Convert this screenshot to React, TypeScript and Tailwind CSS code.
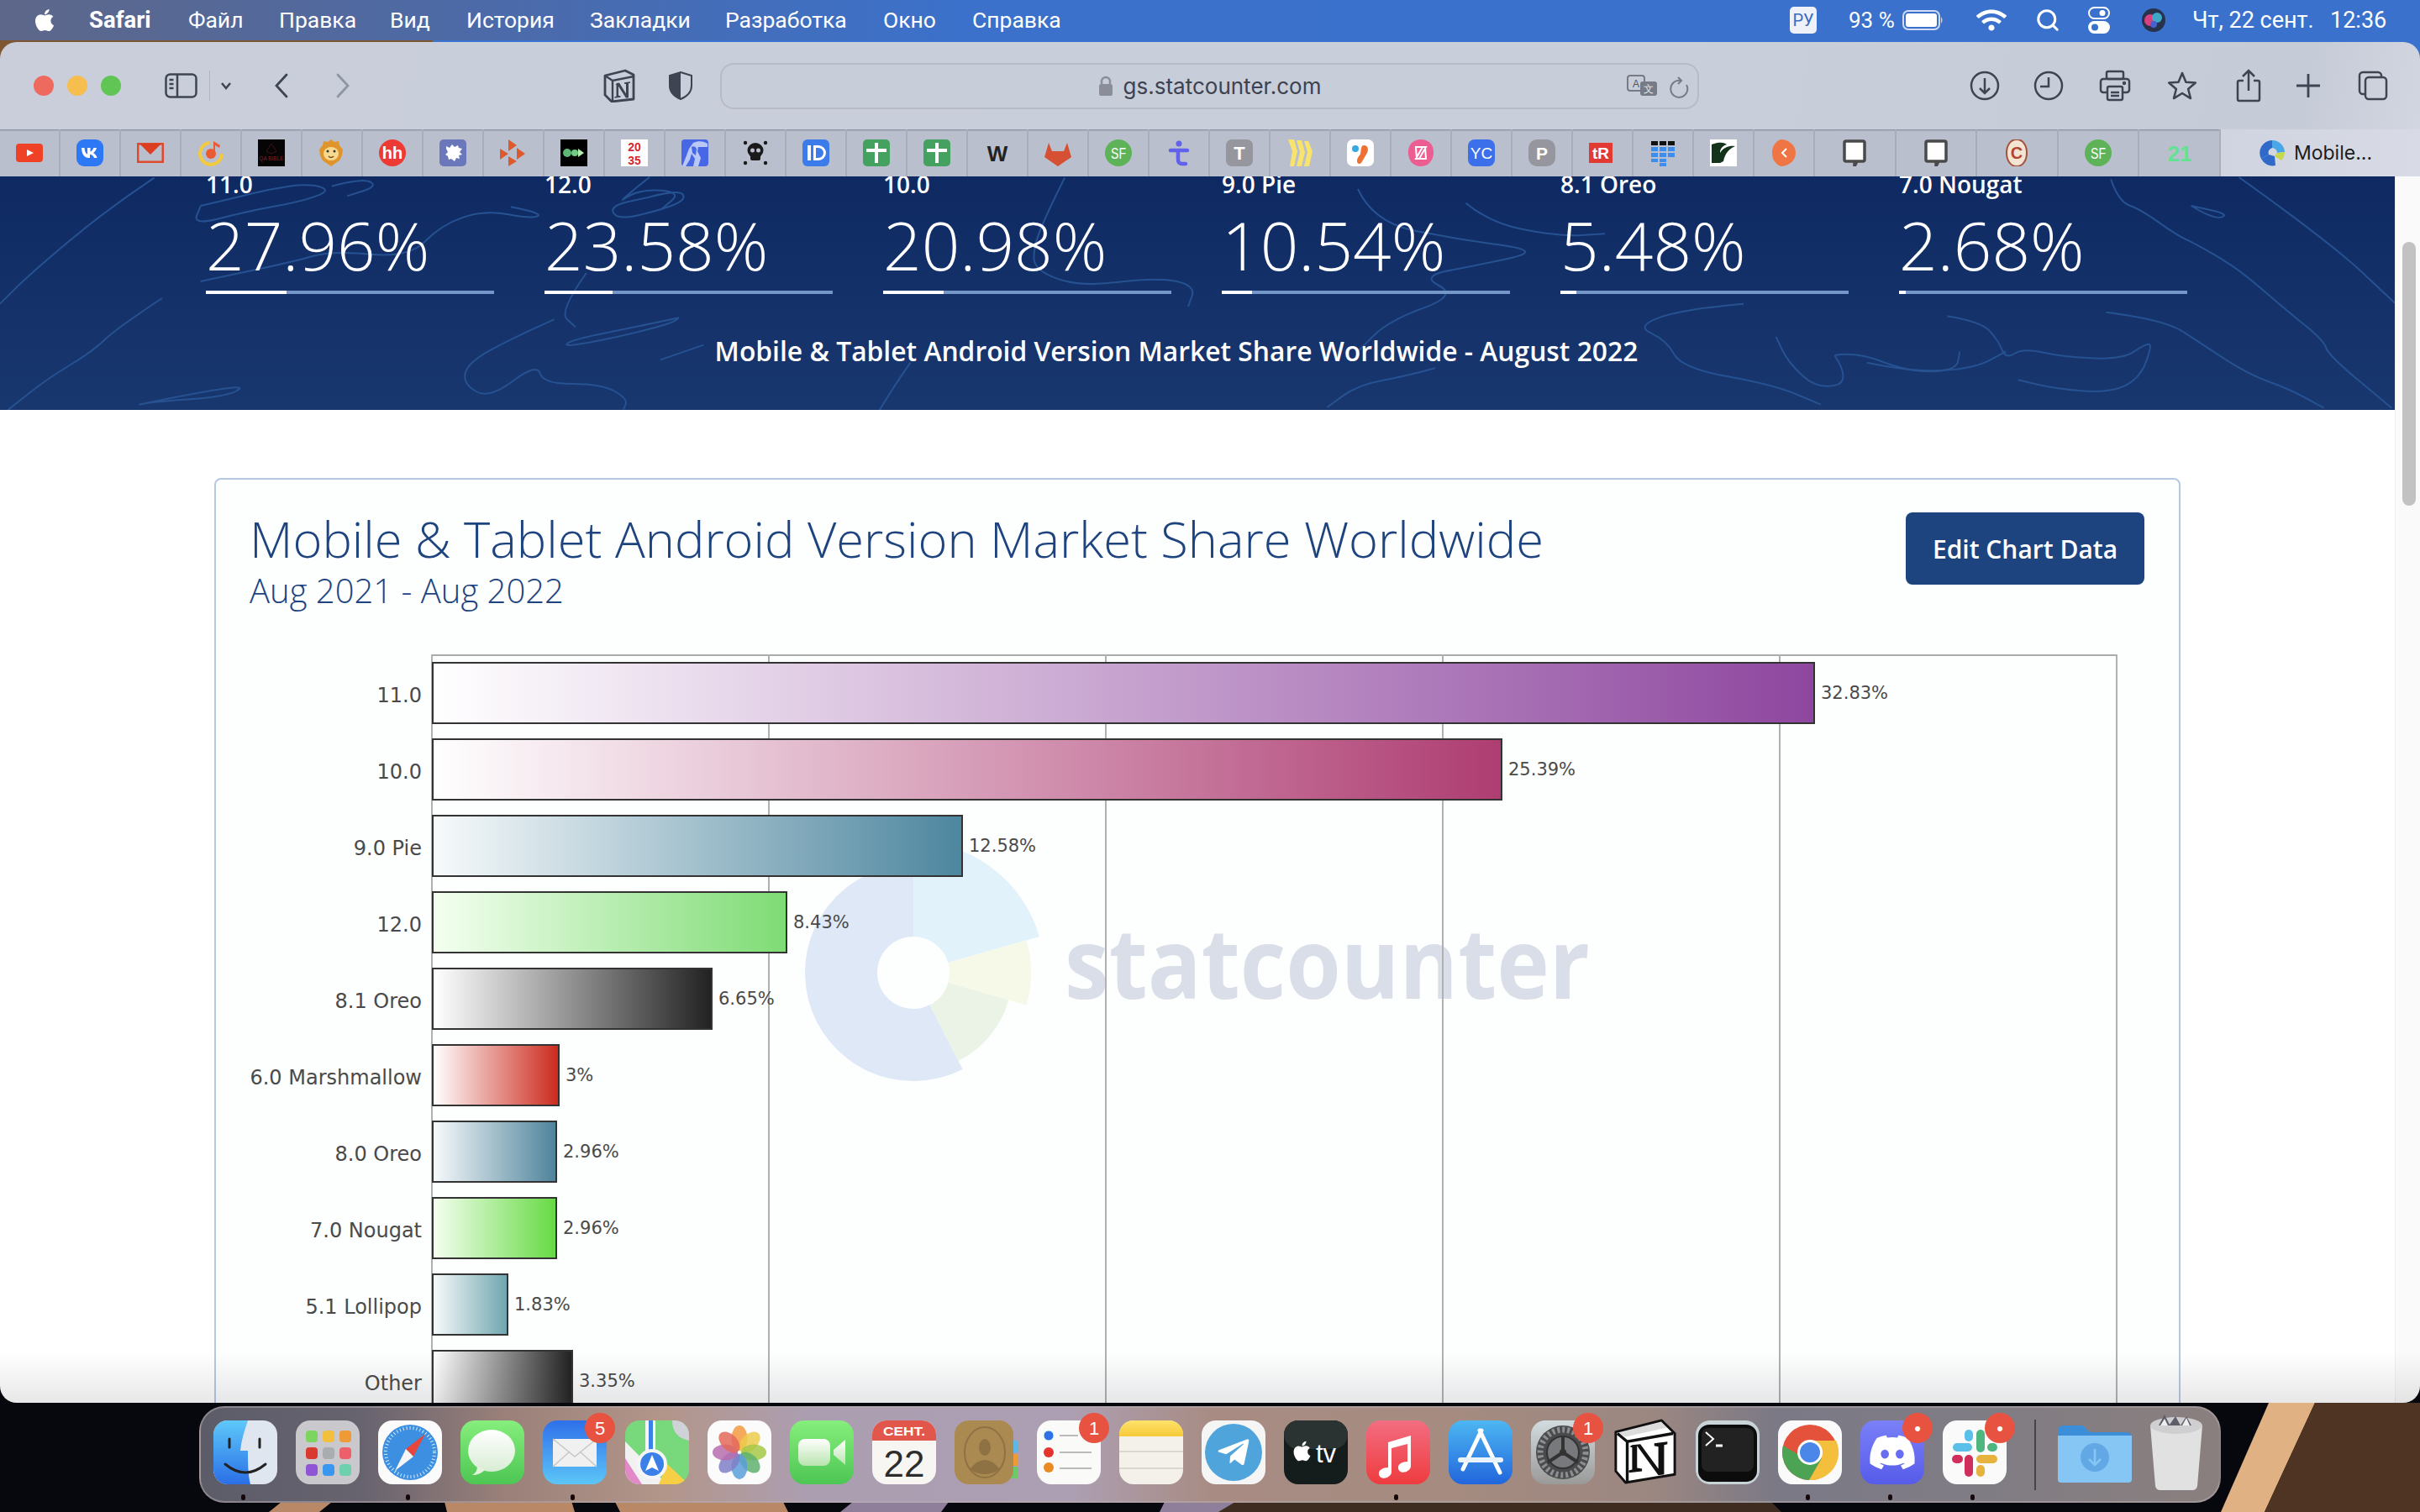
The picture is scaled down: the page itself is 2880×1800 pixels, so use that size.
import React from "react";
import { FaApple, FaDiscord, FaTelegramPlane, FaWifi } from "react-icons/fa";
import { Search } from "lucide-react";

const SF = "font-['Liberation_Sans',sans-serif]";

function Fav({ children }: { children: React.ReactNode }) {
  return <svg width="32" height="32" viewBox="0 0 32 32" fontFamily="Liberation Sans, sans-serif">{children}</svg>;
}

const favs: React.ReactNode[] = [
  <Fav><rect y="5" width="32" height="22" rx="4" fill="#ee4126" /><path d="M13 12l8 4-8 4z" fill="#fff" /></Fav>,
  <Fav><rect width="32" height="32" rx="9" fill="#2d78f4" /><path d="M6 10h3.500c.5 5 2 7 3.500 7.500V10h3.500v4.500c1.500-.2 3-2 3.800-4.500H24c-.6 3-2.400 5-4 6 1.800 1 3.800 2.800 4.600 6H21c-.7-2.400-2.600-4-5-4.300V22h-1C9.500 22 6.300 18 6 10z" fill="#fff" /></Fav>,
  <Fav><rect width="32" height="24" y="4" fill="#e04a2c" /><rect x="2.500" y="6.500" width="27" height="19" fill="#b9bfcd" /><path d="M3 5h26L16 18z" fill="#dc3e22" /></Fav>,
  <Fav><path d="M14 4A13 13 0 1 0 29 17" fill="none" stroke="#f5c93d" strokeWidth="4" /><circle cx="16" cy="17" r="6" fill="#ec5a32" /><path d="M19 2v14h2V7l5 3 1-3z" fill="#ec5a32" /></Fav>,
  <Fav><rect width="32" height="32" fill="#050505" /><path d="M16 5l6 9-6 3-6-3z" fill="none" stroke="#401014" strokeWidth="1" /><text x="16" y="25" fontSize="6.500" fill="#7a2228" textAnchor="middle">QA BIBLE</text></Fav>,
  <Fav><path d="M15 0l4 3 5-1 1 5 4 5-1 7-3 6-10 7-10-7-3-6-1-7 4-5 1-5 5 1z" fill="#e0952c" /><ellipse cx="15" cy="17" rx="9" ry="8" fill="#f6d98f" /><circle cx="11" cy="14" r="1.500" fill="#333" /><circle cx="19" cy="14" r="1.500" fill="#333" /><path d="M12 20q3 3 6 0" fill="none" stroke="#7a4a16" strokeWidth="1.500" /></Fav>,
  <Fav><circle cx="16" cy="16" r="16" fill="#ee3a34" /><text x="16" y="23" fontSize="20" fontWeight="700" fill="#fff" textAnchor="middle">hh</text></Fav>,
  <Fav><rect width="32" height="32" rx="5" fill="#6a78bb" /><path d="M8 8l4 2 3-4 3 3 4-2 1 3 4 1-3 4 3 3-4 1 1 4-4-1-2 4-4-3-3 1-1-4-3-2 3-3-2-4z" fill="#fff" /></Fav>,
  <Fav><path d="M10 0l10 7-10 7zM0 11l10 6-10 7zM20 10l10 7-10 7zM10 20l10 6-10 6z" fill="#dc5a2e" /></Fav>,
  <Fav><rect width="32" height="32" fill="#000" /><circle cx="8" cy="16" r="5" fill="#5cb876" /><circle cx="17" cy="16" r="4" fill="#6fcc80" /><path d="M21 11l7 5-7 5z" fill="#b5ecb0" /></Fav>,
  <Fav><rect width="32" height="32" fill="#fff" /><text x="16" y="13.500" fontSize="14" fontWeight="700" fill="#cf2a30" textAnchor="middle">20</text><text x="16" y="30" fontSize="14" fontWeight="700" fill="#cf2a30" textAnchor="middle">35</text></Fav>,
  <Fav><rect width="32" height="32" rx="4" fill="#4767e6" /><path d="M14 4c6-3 13-2 17 1v4H20l-1 5 4 8-3 10h-6l2-9-4-6-2 7-5 8H1l5-13 3-8z" fill="#b9c8f6" /><path d="M12 9q4-2 6 2l-1 8-4-3z" fill="#4767e6" /></Fav>,
  <Fav><ellipse cx="16" cy="13" rx="9.500" ry="9" fill="#1a1a1a" /><rect x="10" y="18" width="12" height="7" rx="2" fill="#1a1a1a" /><circle cx="12.500" cy="13" r="2.500" fill="#b9bfcd" /><circle cx="19.500" cy="13" r="2.500" fill="#b9bfcd" /><circle cx="4" cy="4" r="2.200" fill="#1a1a1a" /><circle cx="28" cy="4" r="2.200" fill="#1a1a1a" /><circle cx="4" cy="28" r="2.200" fill="#1a1a1a" /><circle cx="28" cy="28" r="2.200" fill="#1a1a1a" /></Fav>,
  <Fav><rect width="32" height="32" rx="6" fill="#3c7bea" /><path d="M6 7h4v18H6z" fill="#fff" /><path d="M13 7h6a9 9 0 0 1 0 18h-6z M16 10v12h3a6 6 0 0 0 0-12z" fill="#fff" fillRule="evenodd" /></Fav>,
  <Fav><rect width="32" height="32" rx="5" fill="#44a160" /><rect x="14" y="4" width="4" height="24" fill="#fff" /><rect x="4" y="11" width="24" height="4" fill="#fff" /></Fav>,
  <Fav><rect width="32" height="32" rx="5" fill="#44a160" /><rect x="14" y="4" width="4" height="24" fill="#fff" /><rect x="4" y="11" width="24" height="4" fill="#fff" /></Fav>,
  <Fav><text x="16" y="26" fontSize="26" fontWeight="700" fill="#222" textAnchor="middle">W</text></Fav>,
  <Fav><path d="M5 4l4 10h14l4-10 5 17-16 11L0 21z" fill="#d65034" /></Fav>,
  <Fav><circle cx="16" cy="16" r="16" fill="#5eb358" /><text x="16" y="23" fontSize="19" fill="#fff" textAnchor="middle" textLength="18" lengthAdjust="spacingAndGlyphs">SF</text></Fav>,
  <Fav><circle cx="16" cy="5" r="3.500" fill="#6161ec" /><path d="M6 13h20M15 13v11q0 5 5 5h4" fill="none" stroke="#6161ec" strokeWidth="4.500" strokeLinecap="round" /></Fav>,
  <Fav><rect width="32" height="32" rx="7" fill="#96969f" /><text x="16" y="24" fontSize="22" fontWeight="700" fill="#fff" textAnchor="middle">T</text></Fav>,
  <Fav><path d="M2 0h7l4 14-4 18H4l3-18zM12 1h6l4 14-4 17h-6l4-17zM21 2h5l5 12-4 18h-6l4-17z" fill="#f8e36c" /></Fav>,
  <Fav><rect width="32" height="32" rx="7" fill="#fff" /><path d="M20 7c5 0 6 5 4 9l-7 12c-2 2-5 1-5-2 0-5 3-6 4-9s0-10 4-10z" fill="#ed7132" /><circle cx="10" cy="11" r="4" fill="#3aa8e0" /></Fav>,
  <Fav><path d="M16 0c8 0 14 5 15 13 1 10-5 19-15 19S0 24 1 13C2 5 8 0 16 0z" fill="#ec5e92" /><path d="M10 9h12l-8 14h-3zM22 23H10l8-14h3z" fill="none" stroke="#fff" strokeWidth="2" /></Fav>,
  <Fav><rect width="32" height="32" rx="8" fill="#3c70ea" /><text x="16" y="23" fontSize="19" fill="#fff" textAnchor="middle">YC</text></Fav>,
  <Fav><rect width="32" height="32" rx="10" fill="#96969f" /><text x="16" y="24" fontSize="21" fontWeight="700" fill="#fff" textAnchor="middle">P</text></Fav>,
  <Fav><rect y="4" width="28" height="24" fill="#e23a33" /><text x="14" y="23" fontSize="19" fontWeight="700" fill="#fff" textAnchor="middle">tR</text></Fav>,
  <Fav><path d="M2 2h8v5H2zM12 2h8v5h-8zM22 2h8v5h-8z" fill="#111" /><path d="M2 9h8v5H2zM12 9h8v5h-8zM22 9h8v5h-8zM2 16h8v5H2zM12 16h8v5h-8zM22 16h8v5h-8zM2 23h8v4H2zM12 23h8v4h-8zM12 28h8v4h-8z" fill="#3d8cf0" /></Fav>,
  <Fav><rect width="32" height="32" fill="#fff" /><path d="M2 28V6c10-4 16-2 18 0-6 2-8 6-8 10 4-7 12-9 18-8-7 3-12 8-14 18l-4 2z" fill="#13341a" /></Fav>,
  <Fav><path d="M12 0c10 0 18 7 18 16s-8 16-18 16C4 28 2 22 2 16S4 4 12 0z" fill="#ef7644" /><path d="M19 11l-5 5 5 5" fill="none" stroke="#fff" strokeWidth="2" /></Fav>,
  <Fav><path d="M6 2h20a2 2 0 0 1 2 2v20a2 2 0 0 1-2 2h-7l-3 6v-6H6a2 2 0 0 1-2-2V4a2 2 0 0 1 2-2z" fill="#fff" stroke="#4a4a4a" strokeWidth="3.500" /></Fav>,
  <Fav><path d="M6 2h20a2 2 0 0 1 2 2v20a2 2 0 0 1-2 2h-7l-3 6v-6H6a2 2 0 0 1-2-2V4a2 2 0 0 1 2-2z" fill="#fff" stroke="#4a4a4a" strokeWidth="3.500" /></Fav>,
  <Fav><path d="M16 0c8 0 12 8 12 16s-4 16-12 16S4 24 4 16 8 0 16 0z" fill="#f4e5d2" stroke="#a4513c" strokeWidth="2" /><text x="16" y="23" fontSize="20" fontWeight="700" fill="#b3442f" textAnchor="middle">C</text></Fav>,
  <Fav><circle cx="16" cy="16" r="16" fill="#5eb358" /><text x="16" y="23" fontSize="19" fill="#fff" textAnchor="middle" textLength="18" lengthAdjust="spacingAndGlyphs">SF</text></Fav>,
  <Fav><text x="16" y="26" fontSize="26" fontWeight="700" fill="#62e292" textAnchor="middle">21</text></Fav>,
];

const menuItems: [string, string][] = [
  ["Файл", "w-[108px]"], ["Правка", "w-[132px]"], ["Вид", "w-[91px]"], ["История", "w-[147px]"],
  ["Закладки", "w-[161px]"], ["Разработка", "w-[188px]"], ["Окно", "w-[106px]"], ["Справка", "w-[140px]"],
];

function MenuBar() {
  return (
    <div className={`relative z-10 h-[48px] shrink-0 flex items-center text-white text-[26.5px] font-['Roboto',sans-serif] bg-[linear-gradient(90deg,#5d6789_0%,#4c6aa8_20%,#3b71cb_40%,#3a71cd_100%)]`}>
      <div className="w-[106px] pl-[38px]"><FaApple size={30} /></div>
      <div className="w-[118px] font-bold text-[27.5px]">Safari</div>
      {menuItems.map(([t, w]) => <div key={t} className={w}>{t}</div>)}
      <div className="flex-1" />
      <div className="w-[32px] h-[32px] rounded-[5px] bg-[#eef1f8] text-[#3a6cc0] text-[20px] flex items-center justify-center">РУ</div>
      <div className="ml-[38px] w-[64px] whitespace-nowrap text-[26px]">93 %</div>
      <svg width="50" height="24" viewBox="0 0 50 24"><rect x="1" y="1" width="43" height="22" rx="6" fill="none" stroke="#cfdcf4" strokeWidth="2" /><rect x="4" y="4" width="37" height="16" rx="3" fill="#fff" /><path d="M46 8q3 4 0 8z" fill="#cfdcf4" /></svg>
      <div className="ml-[38px] w-[40px]"><FaWifi size={36} /></div>
      <div className="ml-[30px] w-[28px]"><Search size={30} strokeWidth={2.400} /></div>
      <svg className="ml-[35px]" width="26" height="32" viewBox="0 0 26 32"><rect x="1" y="1" width="24" height="13" rx="6.500" fill="none" stroke="#fff" strokeWidth="2" /><circle cx="17" cy="7.500" r="3.500" fill="#fff" /><rect y="17" width="26" height="15" rx="7.500" fill="#fff" /><circle cx="8" cy="24.500" r="4" fill="#3a71cd" /></svg>
      <svg className="ml-[37px]" width="30" height="30" viewBox="0 0 30 30"><circle cx="15" cy="15" r="14" fill="#27324c" /><circle cx="11" cy="15" r="7" fill="#d8417e" /><circle cx="19" cy="12" r="6" fill="#3fa8c8" /><circle cx="15" cy="20" r="4" fill="#4a5fd0" /></svg>
      <div className="ml-[31px] w-[164px] whitespace-nowrap text-[27px]">Чт, 22 сент.</div>
      <div className="w-[107px] whitespace-nowrap text-[27px]">12:36</div>
    </div>
  );
}

const ic = "#3e4452";

function Toolbar() {
  return (
    <div className="h-[104px] shrink-0 flex items-center bg-[linear-gradient(100deg,#c9ceda_0%,#c8ceda_70%,#c6cbd8_95%,#d2d6e0_100%)] relative">
      <div className="w-[24px] h-[24px] rounded-full bg-[#ef6a5e] ml-[40px]" />
      <div className="w-[24px] h-[24px] rounded-full bg-[#f6bd4f] ml-[16px]" />
      <div className="w-[24px] h-[24px] rounded-full bg-[#60c554] ml-[16px]" />
      <svg className="ml-[52px]" width="40" height="30" viewBox="0 0 40 30" fill="none" stroke={ic} strokeWidth="2.500"><rect x="1.500" y="1.500" width="36" height="27" rx="5" /><path d="M15 2v26" /><path d="M5.500 8h5M5.500 13h5M5.500 18h5" /></svg>
      <div className="w-[1px] h-[36px] bg-[#aeb3c0] ml-[13px]" />
      <svg className="ml-[13px]" width="12" height="10" viewBox="0 0 12 10" fill="none" stroke={ic} strokeWidth="2.500"><path d="M1 2l5 6 5-6" /></svg>
      <svg className="ml-[51px]" width="18" height="30" viewBox="0 0 18 30" fill="none" stroke={ic} strokeWidth="2.800" strokeLinecap="round"><path d="M15 2L3 15l12 13" /></svg>
      <svg className="ml-[55px]" width="18" height="30" viewBox="0 0 18 30" fill="none" stroke="#8f95a3" strokeWidth="2.800" strokeLinecap="round"><path d="M3 2l12 13L3 28" /></svg>
      <svg className="ml-[301px]" width="38" height="40" viewBox="0 0 38 40"><path d="M2 8L26 2l10 5v29L10 39 2 31z" fill="none" stroke={ic} strokeWidth="2.800" strokeLinejoin="round" /><path d="M2 8l9 6 25-5M11 14v25" fill="none" stroke={ic} strokeWidth="2.400" /><path d="M16 17l3-.5 8 13V18l-2-.3v-1.500l7-1v1.500l-2 .5v17l-3 .5-9-14v11l2.500.5v1.500l-7 1v-1.500l2-.5V19l-1-.3z" fill={ic} /></svg>
      <svg className="ml-[40px]" width="28" height="34" viewBox="0 0 28 34"><path d="M14 1l13 4v12c0 8-6 13-13 16C7 30 1 25 1 17V5z" fill="none" stroke={ic} strokeWidth="2" /><path d="M14 1L1 5v12c0 8 6 13 13 16z" fill={ic} /></svg>
      <div className="ml-[33px] w-[1165px] h-[55px] rounded-[16px] border-2 border-[#b7bbc8] bg-[#c8cdda] relative flex items-center justify-center">
        <svg className="mr-[12px]" width="18" height="24" viewBox="0 0 18 24"><path d="M4 11V7a5 5 0 0 1 10 0v4" fill="none" stroke="#8b8e98" strokeWidth="2.500" /><rect x="1" y="10" width="16" height="14" rx="2.500" fill="#8b8e98" /></svg>
        <span className="text-[26px] text-[#3d424e] font-['Inter',sans-serif]">gs.statcounter.com</span>
        <svg className="absolute left-[1077px] top-[12px]" width="38" height="28" viewBox="0 0 38 28"><rect x="1" y="1" width="20" height="18" rx="3" fill="#c8cdda" stroke="#777b85" strokeWidth="2" /><text x="11" y="15" fontSize="12" fill="#555" textAnchor="middle">A</text><rect x="16" y="8" width="20" height="17" rx="3" fill="#777b85" /><text x="26" y="21" fontSize="12" fill="#e5e7ef" textAnchor="middle">文</text></svg>
        <svg className="absolute left-[1127px] top-[14px]" width="24" height="26" viewBox="0 0 24 26" fill="none" stroke="#777b85" strokeWidth="2"><path d="M14 5a10 10 0 1 0 7 5" /><path d="M11 1l4 4-4 4" /></svg>
      </div>
      <svg className="ml-[322px]" width="36" height="36" viewBox="0 0 36 36" fill="none" stroke={ic} strokeWidth="2.500"><circle cx="18" cy="18" r="16" /><path d="M18 9v18M12 21l6 6 6-6" /></svg>
      <svg className="ml-[40px]" width="36" height="36" viewBox="0 0 36 36" fill="none" stroke={ic} strokeWidth="2.500"><circle cx="18" cy="18" r="16" /><path d="M18 8v11H8" /></svg>
      <svg className="ml-[42px]" width="38" height="38" viewBox="0 0 38 38" fill="none" stroke={ic} strokeWidth="2.500"><rect x="2" y="11" width="34" height="16" rx="3" /><rect x="9" y="2" width="20" height="9" rx="2" /><rect x="10" y="20" width="18" height="16" rx="2" fill="#c8cdda" /><path d="M14 27h10M14 31h10" /><circle cx="30" cy="16" r="1" /></svg>
      <svg className="ml-[42px]" width="38" height="38" viewBox="0 0 24 24" fill="none" stroke={ic} strokeWidth="1.600" strokeLinejoin="round"><path d="M12 2.500l2.800 6.800 7.200.5-5.500 4.700 1.800 7-6.300-3.800L5.700 21.500l1.800-7L2 9.800l7.200-.5z" /></svg>
      <svg className="ml-[45px]" width="30" height="40" viewBox="0 0 30 40" fill="none" stroke={ic} strokeWidth="2.500"><path d="M9 14H4a2 2 0 0 0-2 2v20a2 2 0 0 0 2 2h22a2 2 0 0 0 2-2V16a2 2 0 0 0-2-2h-5" /><path d="M15 26V2M8 9l7-7 7 7" /></svg>
      <svg className="ml-[42px]" width="28" height="28" viewBox="0 0 28 28" fill="none" stroke={ic} strokeWidth="2.800"><path d="M14 0v28M0 14h28" /></svg>
      <svg className="ml-[45px]" width="36" height="36" viewBox="0 0 36 36" fill="none" stroke={ic} strokeWidth="2.500"><rect x="9" y="8" width="25" height="26" rx="4" /><path d="M9 28H6a4 4 0 0 1-4-4V6a4 4 0 0 1 4-4h18a4 4 0 0 1 4 4v2" /></svg>
    </div>
  );
}

function Bookmarks() {
  return (
    <div className="h-[56px] shrink-0 flex font-['Inter',sans-serif]">
      <div className="flex bg-[#b9bfcd] shadow-[inset_0_3px_2px_-2px_rgba(60,65,85,0.45)]">
        {favs.map((f, i) => (
          <div key={i} className={`${i < 30 ? "w-[72px]" : "w-[96.6px]"} h-[56px] border-r-2 border-[#a7adbc] flex items-center justify-center`}>{f}</div>
        ))}
      </div>
      <div className="flex-1 flex items-center pl-[45px] bg-[linear-gradient(90deg,#d0d4e0,#d8dbe5)]">
        <svg width="32" height="32" viewBox="0 0 32 32"><path d="M16 1A15 15 0 0 0 3 23l9-5a6 6 0 0 1 4-8z" fill="#2f6ac8" /><path d="M16 1a15 15 0 0 1 15 14l-9 1a6 6 0 0 0-6-6z" fill="#49a6e8" /><path d="M31 15a15 15 0 0 1-4 10l-8-5 3-4z" fill="#c7d84a" /><path d="M3 23a15 15 0 0 0 17 8l-1-11-7-2z" fill="#2f6ac8" /></svg>
        <span className="ml-[10px] text-[23px] text-[#1c1c1c]">Mobile...</span>
      </div>
    </div>
  );
}

const stats = [
  ["11.0", "27.96%", 96], ["12.0", "23.58%", 81], ["10.0", "20.98%", 72],
  ["9.0 Pie", "10.54%", 36], ["8.1 Oreo", "5.48%", 19], ["7.0 Nougat", "2.68%", 8],
] as const;

const coast = [
  "M100 20L70 130 20 360 0 470", "M105 450L75 560 60 640 30 740 5 850",
  "M130 120L150 95 175 60 200 40 215 65 195 105 160 140 125 190 130 120", "M215 50L235 20 245 50 225 85",
  "M331 124L352 146 345 167 314 135 286 188 265 306 215 280 190 320 130 390", "M420 90L440 60 445 100 425 140 400 170 395 120 420 90",
  "M421 17L397 124 414 60 442 71 428 135", "M380 360L362 499 373 553",
  "M359 526L331 595 303 681 300 756 317 810 348 681 352 756 390 756 407 810 404 847", "M428 670L456 617",
  "M440 520L405 560 370 600 365 625 400 590 435 540 440 520",
  "M690 20L680 130 670 260 670 350 700 410 750 375 775 405 770 480", "M880 60L890 180 945 240 1000 280 960 330 920 370 945 440 900 530 880 640",
  "M950 110L965 180 1010 230 1040 220", "M1130 470L1090 490 1060 550 1080 600 1090 700 1150 760 1180 830",
  "M1262 514L1284 534 1295 601 1300 668 1311 628 1338 661 1376 668 1390 614 1395 614 1387 735 1368 788 1333 775 1308 742",
  "M1189 654L1203 641 1238 715 1268 708 1270 641", "M1189 654L1200 748 1178 775 1159 681 1151 588",
  "M1365 500L1403 527 1427 614 1457 722 1484 775 1506 842",
  "M1368 25L1373 105 1387 132 1411 226 1422 253 1447 333 1465 413 1482 494 1506 601 1509 654 1550 842",
  "M1451 18L1510 250 1552 467", "M1420 120L1435 170 1445 150 1420 120",
  "M90 830L160 750 150 800 100 820 90 830", "M930 700L910 730 880 760 860 840", "M590 680L580 760 570 850", "M1210 680L1240 715 1280 700 1300 640",
];

function smooth(d: string) {
  const n = d.match(/[\d.]+/g)!.map(Number);
  const pts: [number, number][] = [];
  for (let i = 0; i < n.length; i += 2) pts.push([n[i], n[i + 1]]);
  let out = `M${pts[0][0]} ${pts[0][1]}`;
  for (let i = 1; i < pts.length - 1; i++) {
    const mx = (pts[i][0] + pts[i + 1][0]) / 2;
    const my = (pts[i][1] + pts[i + 1][1]) / 2;
    out += `Q${pts[i][0]} ${pts[i][1]} ${mx} ${my}`;
  }
  const l = pts[pts.length - 1];
  return `${out}L${l[0]} ${l[1]}`;
}

function Banner() {
  return (
    <div className="relative h-[278px] shrink-0 overflow-hidden text-white bg-[linear-gradient(180deg,#0f2a63_0%,#19376f_100%)]">
      <svg className="absolute inset-0" width="2850" height="278" viewBox="0 15 1552 834" preserveAspectRatio="none" fill="none" stroke="#265291" strokeWidth="2" strokeLinejoin="round">
        {coast.map((d, i) => <path key={i} d={smooth(d)} vectorEffect="non-scaling-stroke" />)}
      </svg>
      <div className="relative flex pl-[245px] gap-[60px] -mt-[8px]">
        {stats.map(([l, v, f]) => (
          <div key={l} className="w-[343px]">
            <div className="text-[28px] leading-[34px] font-semibold whitespace-nowrap">{l}</div>
            <div className="text-[80px] leading-[88px] font-light mt-[11px] whitespace-nowrap">{v}</div>
            <div className="h-[4px] mt-[11px] bg-[#7496c8]"><div className="h-full bg-white" style={{ width: f }} /></div>
          </div>
        ))}
      </div>
      <div className="relative text-center text-[31.8px] font-semibold leading-[44px] mt-[46px] pr-[50px] whitespace-nowrap">Mobile &amp; Tablet Android Version Market Share Worldwide - August 2022</div>
    </div>
  );
}

const rows: [string, string, number, string, string][] = [
  ["11.0", "32.83%", 1646, "#ffffff", "#8e479f"],
  ["10.0", "25.39%", 1274, "#ffffff", "#ae3d72"],
  ["9.0 Pie", "12.58%", 632, "#f7fafb", "#4d869f"],
  ["12.0", "8.43%", 423, "#f4fff0", "#7edc74"],
  ["8.1 Oreo", "6.65%", 334, "#ffffff", "#222222"],
  ["6.0 Marshmallow", "3%", 152, "#ffffff", "#cc2b1e"],
  ["8.0 Oreo", "2.96%", 149, "#f7fafb", "#4f849c"],
  ["7.0 Nougat", "2.96%", 149, "#f4fff0", "#67da44"],
  ["5.1 Lollipop", "1.83%", 91, "#f7fafb", "#70a6af"],
  ["Other", "3.35%", 168, "#ffffff", "#222222"],
];

function arc(r0: number, r1: number, a0: number, a1: number) {
  const p = (r: number, a: number) => {
    const t = (a * Math.PI) / 180;
    return `${(170 + r * Math.sin(t)).toFixed(1)} ${(170 - r * Math.cos(t)).toFixed(1)}`;
  };
  const big = a1 - a0 > 180 ? 1 : 0;
  return `M${p(r1, a0)}A${r1} ${r1} 0 ${big} 1 ${p(r1, a1)}L${p(r0, a1)}A${r0} ${r0} 0 ${big} 0 ${p(r0, a0)}Z`;
}

function Chart() {
  const grid = ["left-[256px]", "left-[657px]", "left-[1058px]", "left-[1459px]", "left-[1860px]", "left-[2261px]"];
  return (
    <div className="relative font-['DejaVu_Sans',sans-serif] text-[#4a4a4a]">
      <svg className="absolute left-[660px] top-[209px]" width="340" height="340" viewBox="0 0 340 340">
        <path d={arc(43, 129, 153, 360)} fill="#dfe8f7" />
        <path d={arc(43, 156, 0, 74)} fill="#e2f2fb" />
        <path d={arc(43, 140, 74, 106)} fill="#f7f9e8" />
        <path d={arc(43, 118, 106, 153)} fill="#eaf3e6" />
      </svg>
      <div className="absolute left-[1010px] top-[290px] text-[#d9dee8] font-['Open_Sans',sans-serif] font-bold text-[106px] leading-[150px] whitespace-nowrap origin-left scale-y-[1.1]">statcounter</div>
      <div className="absolute left-[256px] top-0 w-[2007px] h-[2px] bg-[#aaaaaa]" />
      {grid.map((g) => <div key={g} className={`absolute ${g} top-0 bottom-0 w-[2px] bg-[#b0b0b0]`} />)}
      {rows.map(([l, v, w, a, b]) => (
        <div key={l} className="relative flex items-center h-[91px]">
          <div className="w-[257px] pr-[12px] pt-[6px] text-right text-[24px] whitespace-nowrap">{l}</div>
          <div className="h-[74px] border-2 border-[#333]" style={{ width: w, backgroundImage: `linear-gradient(90deg, ${a}, ${b})` }} />
          <div className="ml-[7px] pt-[3px] text-[21px] whitespace-nowrap">{v}</div>
        </div>
      ))}
    </div>
  );
}

function Page() {
  return (
    <div className="flex-1 flex min-h-0 relative">
      <div className="flex-1 min-w-0 bg-white overflow-hidden font-['Open_Sans',sans-serif]">
        <Banner />
        <div className="ml-[255px] mt-[81px] w-[2340px] rounded-[8px] border-2 border-[#b5c8e2] bg-[#fdfefe]">
          <div className="h-[208px] flex justify-between pl-[40px] pr-[41px] pt-[39px]">
            <div className="-mt-[5px] text-[#1e4480] font-light whitespace-nowrap">
              <div className="text-[59.6px] leading-[72px]">Mobile &amp; Tablet Android Version Market Share Worldwide</div>
              <div className="text-[40px] leading-[52px]">Aug 2021 - Aug 2022</div>
            </div>
            <div className="w-[284px] h-[86px] rounded-[8px] bg-[#1e4480] text-white text-[30px] font-semibold flex items-center justify-center">Edit Chart Data</div>
          </div>
          <Chart />
        </div>
      </div>
      <div className="w-[30px] shrink-0 bg-[#fafafa] border-l border-[#eeeeee] pl-[8px]">
        <div className="w-[16px] h-[314px] mt-[78px] rounded-full bg-[#c2c2c2]" />
      </div>
      <div className="absolute left-0 right-0 bottom-0 h-[60px] bg-[linear-gradient(180deg,rgba(40,40,50,0),rgba(40,40,50,0.11))]" />
    </div>
  );
}

function Tile({ children }: { children: React.ReactNode }) {
  return <svg width="76" height="76" viewBox="0 0 76 76" fontFamily="Liberation Sans, sans-serif">{children}</svg>;
}

const R = 17;
const dock: { icon: React.ReactNode; dot?: boolean; badge?: string }[] = [
  { dot: true, icon: <Tile><defs><linearGradient id="fi" x1="0" y1="0" x2="0" y2="1"><stop offset="0" stopColor="#5ec8fa" /><stop offset="1" stopColor="#2a6fe6" /></linearGradient></defs><rect width="76" height="76" rx={R} fill="#dfe6ef" /><path d="M17 0h24c-4 12-8 24-9 36h9c0 14 0 28 3 40H17A17 17 0 0 1 0 59V17A17 17 0 0 1 17 0z" fill="url(#fi)" /><path d="M19 22v10M55 22v10" stroke="#222" strokeWidth="3" strokeLinecap="round" /><path d="M14 52q24 20 48 0" fill="none" stroke="#222" strokeWidth="3" strokeLinecap="round" /></Tile> },
  { icon: <Tile><rect width="76" height="76" rx={R} fill="#c9c8cd" />{[["#7cd55e", "#f3bf3e", "#ee9a36"], ["#d9392f", "#a9adb0", "#ee5f6c"], ["#8f55d6", "#3a97ef", "#6fd0ae"]].map((r, i) => r.map((c, j) => <rect key={`${i}${j}`} x={12 + j * 20} y={12 + i * 20} width="14" height="14" rx="4" fill={c} />))}</Tile> },
  { dot: true, icon: <Tile><rect width="76" height="76" rx={R} fill="#fbfbfb" /><circle cx="38" cy="38" r="33" fill="#3d8fe2" /><circle cx="38" cy="38" r="29" fill="none" stroke="#d7ecfb" strokeWidth="4" strokeDasharray="1 3" /><path d="M56 16L33 34l9 9z" fill="#e6473a" /><path d="M20 60l22-17-9-9z" fill="#f5f5f5" /></Tile> },
  { icon: <Tile><defs><linearGradient id="ms" x1="0" y1="0" x2="0" y2="1"><stop offset="0" stopColor="#86ee7c" /><stop offset="1" stopColor="#4dc653" /></linearGradient><linearGradient id="mb" x1="0" y1="0" x2="0" y2="1"><stop offset="0" stopColor="#fff" /><stop offset="1" stopColor="#d8edd4" /></linearGradient></defs><rect width="76" height="76" rx={R} fill="url(#ms)" /><ellipse cx="37" cy="36" rx="28" ry="25" fill="url(#mb)" /><path d="M20 54q0 8-6 11 9 0 15-6z" fill="#e2f2dd" /></Tile> },
  { dot: true, badge: "5", icon: <Tile><defs><linearGradient id="ml" x1="0" y1="0" x2="0" y2="1"><stop offset="0" stopColor="#2f70ea" /><stop offset="1" stopColor="#5cc6f7" /></linearGradient></defs><rect width="76" height="76" rx={R} fill="url(#ml)" /><rect x="12" y="22" width="52" height="33" rx="3" fill="#f0f0f0" /><path d="M12 22l26 21 26-21M12 55l20-18M64 55L44 37" fill="none" stroke="#c8c8c8" strokeWidth="1.500" /></Tile> },
  { icon: <Tile><defs><clipPath id="mp"><rect width="76" height="76" rx={R} /></clipPath></defs><g clipPath="url(#mp)"><rect width="76" height="76" fill="#78d87c" /><path d="M0 25l50 51H0z" fill="#f1f1f1" /><path d="M0 45l20 31H0z" fill="#e28ac8" /><path d="M40 76l10-24 26 24z" fill="#f6cf46" /><path d="M56 0q0 20 20 24V8L66 0z" fill="#cfd2d6" /><path d="M24 0h12v40H24z" fill="#f5f5f5" /><path d="M28 0h5v40h-5z" fill="#3b82e8" /><circle cx="32" cy="52" r="18" fill="#f5f5f5" /><circle cx="32" cy="52" r="14" fill="#3b7fe8" /><path d="M32 41l8 19-8-4-8 4z" fill="#fff" /></g></Tile> },
  { icon: <Tile><rect width="76" height="76" rx={R} fill="#fbfbfb" />{[["#f29a3f", 0], ["#eccb4b", 45], ["#a6c846", 90], ["#5fb06e", 135], ["#5a9ed8", 180], ["#7f7fc8", 225], ["#b76cae", 270], ["#e3685a", 315]].map(([c, a]) => <ellipse key={a as number} cx="38" cy="21" rx="9.500" ry="15" fill={c as string} fillOpacity="0.85" transform={`rotate(${a} 38 38)`} />)}</Tile> },
  { icon: <Tile><defs><linearGradient id="ft" x1="0" y1="0" x2="0" y2="1"><stop offset="0" stopColor="#86ee7c" /><stop offset="1" stopColor="#4dc653" /></linearGradient><linearGradient id="fb" x1="0" y1="0" x2="0" y2="1"><stop offset="0" stopColor="#fff" /><stop offset="1" stopColor="#b8e4ae" /></linearGradient></defs><rect width="76" height="76" rx={R} fill="url(#ft)" /><rect x="10" y="22" width="38" height="32" rx="8" fill="url(#fb)" /><path d="M52 35l14-12v30L52 41z" fill="url(#fb)" /></Tile> },
  { icon: <Tile><rect width="76" height="76" rx={R} fill="#f7f6f2" /><path d="M17 0h42a17 17 0 0 1 17 17v7H0v-7A17 17 0 0 1 17 0z" fill="#e2574c" /><text x="38" y="18" fontSize="15" fontWeight="700" fill="#fff" textAnchor="middle" textLength="50" lengthAdjust="spacingAndGlyphs">СЕНТ.</text><text x="38" y="67" fontSize="44" fill="#2c2c2c" textAnchor="middle">22</text></Tile> },
  { icon: <Tile><rect x="66" y="24" width="10" height="14" fill="#5bb8e8" /><rect x="66" y="40" width="10" height="14" fill="#ee9a36" /><rect x="66" y="55" width="10" height="14" fill="#6fc96a" /><rect width="70" height="76" rx={R} fill="#ab8a52" /><ellipse cx="36" cy="38" rx="24" ry="30" fill="none" stroke="#8f7244" strokeWidth="2" /><ellipse cx="36" cy="32" rx="7" ry="10" fill="#8f7244" /><path d="M18 58q18-22 36 0-18 12-36 0z" fill="#8f7244" /></Tile> },
  { badge: "1", icon: <Tile><rect width="76" height="76" rx={R} fill="#fafaf8" /><circle cx="14" cy="18" r="6" fill="#2f6fe8" stroke="#cfe" strokeWidth="1" /><circle cx="14" cy="38" r="6" fill="#e4342d" /><circle cx="14" cy="56" r="6" fill="#ea8a23" /><path d="M27 18h22M27 38h38M27 57h38" stroke="#bbb" strokeWidth="2" /></Tile> },
  { icon: <Tile><defs><linearGradient id="nt" x1="0" y1="0" x2="0" y2="1"><stop offset="0" stopColor="#fde36a" /><stop offset="1" stopColor="#f8c93a" /></linearGradient></defs><rect width="76" height="76" rx={R} fill="#f3f1e9" /><path d="M17 0h42a17 17 0 0 1 17 17v2H0v-2A17 17 0 0 1 17 0z" fill="url(#nt)" /><path d="M0 37h76M0 57h76" stroke="#d9d7ce" strokeWidth="2" /></Tile> },
  { icon: <Tile><rect width="76" height="76" rx={R} fill="#f5f5f5" /><circle cx="38" cy="38" r="34" fill="#4fa4dc" /><foreignObject x="14" y="14" width="48" height="48"><div className="flex items-center justify-center h-full text-white"><FaTelegramPlane size={42} /></div></foreignObject></Tile> },
  { icon: <Tile><rect width="76" height="76" rx={R} fill="#141c1c" /><rect width="76" height="34" rx={R} fill="#2a3331" /><foreignObject x="8" y="23" width="28" height="30"><div className="text-white"><FaApple size={27} /></div></foreignObject><text x="50" y="50" fontSize="31" fontWeight="400" fill="#fff" textAnchor="middle">tv</text></Tile> },
  { dot: true, icon: <Tile><defs><linearGradient id="mu" x1="0" y1="0" x2="0" y2="1"><stop offset="0" stopColor="#f36d81" /><stop offset="1" stopColor="#ee3c3f" /></linearGradient></defs><rect width="76" height="76" rx={R} fill="url(#mu)" /><path d="M26 26l27-8v36c0 8-14 11-15 3-1-5 5-8 11-8V28L30 33v28c0 8-14 11-15 3-1-5 5-8 11-8z" fill="#fff" /></Tile> },
  { icon: <Tile><defs><linearGradient id="ap" x1="0" y1="0" x2="0" y2="1"><stop offset="0" stopColor="#4db7f2" /><stop offset="1" stopColor="#2166dc" /></linearGradient></defs><rect width="76" height="76" rx={R} fill="url(#ap)" /><path d="M37 12l24 50M39 12L17 58" stroke="#fff" strokeWidth="5" strokeLinecap="round" /><path d="M14 47h48" stroke="#eaf3fc" strokeWidth="6" strokeLinecap="round" /></Tile> },
  { badge: "1", icon: <Tile><defs><linearGradient id="st" x1="0" y1="0" x2="0" y2="1"><stop offset="0" stopColor="#d2dce0" /><stop offset="1" stopColor="#9a9a98" /></linearGradient></defs><rect width="76" height="76" rx={R} fill="url(#st)" /><circle cx="38" cy="38" r="32" fill="#4a4b4d" /><circle cx="38" cy="38" r="27" fill="none" stroke="#8d8f92" strokeWidth="7" strokeDasharray="3 3" /><circle cx="38" cy="38" r="19" fill="#77797c" stroke="#333" strokeWidth="2" /><path d="M38 38V18M38 38L20 50M38 38l18 12" stroke="#333" strokeWidth="4" /><circle cx="38" cy="38" r="4" fill="#333" /></Tile> },
  { icon: <svg width="76" height="80" viewBox="0 0 76 80" className="-mt-[2px]"><path d="M2 16L58 2l16 16v50L14 78 2 64z" fill="#fff" stroke="#111" strokeWidth="3" strokeLinejoin="round" /><path d="M4 18l12 10 56-10M16 28v50" fill="none" stroke="#111" strokeWidth="3.500" /><path d="M22 32l10-1 22 30V34l-5-1v-3l16-2v3l-4 1v36l-7 1-26-36v27l6 1v3l-16 2v-3l4-1V35l-3-1z" fill="#111" /><path d="M2 16L58 2l10 8L14 22z" fill="#111" fillOpacity="0.15" /></svg> },
  { icon: <Tile><rect width="76" height="76" rx={R} fill="#c9d4d8" /><rect x="3" y="5" width="70" height="68" rx="13" fill="#0c0c0c" /><rect x="7" y="9" width="62" height="52" rx="8" fill="#222" /><path d="M12 14l9 8-9 8" fill="none" stroke="#fff" strokeWidth="2" /><path d="M24 30h8" stroke="#fff" strokeWidth="3" /></Tile> },
  { dot: true, icon: <Tile><rect width="76" height="76" rx={R} fill="#fafafa" /><circle cx="38" cy="38" r="33" fill="#e5523c" /><path d="M6 30a33 33 0 0 0 31 41l16-27H30z" fill="#4ba353" /><path d="M38 24h31a33 33 0 0 1-32 47l15-26z" fill="#f5bf3e" /><circle cx="38" cy="38" r="15" fill="#fff" /><circle cx="38" cy="38" r="12" fill="#4a87e8" /></Tile> },
  { dot: true, badge: "•", icon: <Tile><defs><linearGradient id="dc" x1="0" y1="0" x2="0" y2="1"><stop offset="0" stopColor="#7a80f7" /><stop offset="1" stopColor="#575cea" /></linearGradient></defs><rect width="76" height="76" rx={R} fill="url(#dc)" /><foreignObject x="8" y="8" width="60" height="60"><div className="flex items-center justify-center h-full text-white"><FaDiscord size={58} /></div></foreignObject></Tile> },
  { dot: true, badge: "•", icon: <Tile><rect width="76" height="76" rx={R} fill="#fafafa" /><rect x="12" y="27" width="23" height="10" rx="5" fill="#5ac0ea" /><rect x="26" y="11" width="10" height="14" rx="5" fill="#5ac0ea" /><rect x="40" y="11" width="10" height="27" rx="5" fill="#4eb67f" /><rect x="53" y="27" width="12" height="10" rx="5" fill="#4eb67f" /><rect x="40" y="41" width="25" height="10" rx="5" fill="#e6b33f" /><rect x="40" y="53" width="10" height="14" rx="5" fill="#e6b33f" /><rect x="26" y="41" width="10" height="26" rx="5" fill="#d02f5c" /><rect x="11" y="41" width="13" height="10" rx="5" fill="#d02f5c" /></Tile> },
];

function Dock() {
  const stops = "bg-[linear-gradient(90deg,#5c5c69_0%,#67636f_8%,#9a8079_15%,#b3968a_23%,#ac9eb1_30%,#ad9fb3_43%,#a88c84_50%,#a58b80_62%,#9b8781_72%,#7b7986_78%,#7f7c85_87%,#8a7f7e_100%)]";
  return (
    <div className={`relative z-10 ml-[237px] mt-[4px] w-[2406px] h-[115px] shrink-0 rounded-[30px] border-2 border-[#b7aeb0]/50 flex items-start pl-[15px] pt-[15px] ${stops}`}>
      {dock.map((d, i) => (
        <div key={i} className="relative w-[76px] mr-[22px] h-[76px] flex flex-col items-center">
          {d.icon}
          {d.dot && <div className="absolute left-[33px] top-[88px] w-[5px] h-[7px] rounded-full bg-[#16080a]" />}
          {d.badge && <div className="absolute left-[50px] -top-[9px] w-[36px] h-[36px] rounded-full bg-[#e75340] text-white text-[22px] flex items-center justify-center font-['Liberation_Sans',sans-serif]">{d.badge}</div>}
        </div>
      ))}
      <div className="w-[2px] h-[84px] ml-[11px] -mt-[1px] bg-[#45424a]" />
      <svg className="ml-[26px] mt-[2px]" width="88" height="74" viewBox="0 0 88 74"><path d="M0 10a6 6 0 0 1 6-6h24l8 8h44a6 6 0 0 1 6 6v8H0z" fill="#3d8ed8" /><path d="M0 16h88v52a4 4 0 0 1-4 4H4a4 4 0 0 1-4-4z" fill="#86c6f4" /><circle cx="44" cy="42" r="17" fill="#62a8e4" /><path d="M44 32v18M37 44l7 7 7-7" fill="none" stroke="#86c6f4" strokeWidth="2.500" /></svg>
      <svg className="ml-[20px] -mt-[8px]" width="66" height="92" viewBox="0 0 66 92"><path d="M2 14h62l-6 72q-1 5-6 5H14q-5 0-6-5z" fill="#e2e1e2" /><ellipse cx="33" cy="14" rx="31" ry="10" fill="#cfcfd2" /><path d="M12 14l7-13 6 12 7-10 6 11 7-11 6 11" fill="#5c5e6a" /><path d="M14 14l5-8 4 8zM40 14l5-9 4 9z" fill="#eee" /></svg>
    </div>
  );
}

function Wallpaper() {
  return (
    <svg className="absolute inset-0" width="2880" height="1800" viewBox="0 0 2880 1800">
      <rect width="2880" height="1800" fill="#07070e" />
      <rect width="515" height="70" fill="#7e5631" />
      <rect x="515" width="2365" height="70" fill="#3a72d0" />
      <path d="M320 1800l50-40h60l-50 40zM532 1800l-10-40h150l12 40zM738 1800l-20-40h200l20 40z" fill="#b98866" />
      <path d="M1000 1800l50-40h100l-30 40zM1380 1800l20-40h200l-20 40z" fill="#8f7f9b" />
      <path d="M2700 1670h55l-60 130h-52z" fill="#e0b283" />
      <path d="M2755 1670h125v130h-185z" fill="#4f3423" />
      <path d="M1450 1800l50-30h300l30 30zM1800 1800l40-30h250l30 30z" fill="#3e2c20" />
    </svg>
  );
}

export default function App() {
  return (
    <div className={`relative w-[2880px] h-[1800px] overflow-hidden flex flex-col ${SF}`}>
      <Wallpaper />
      <MenuBar />
      <div className="relative mt-[2px] h-[1620px] shrink-0 rounded-[20px] overflow-hidden flex flex-col">
        <Toolbar />
        <Bookmarks />
        <Page />
      </div>
      <Dock />
    </div>
  );
}
